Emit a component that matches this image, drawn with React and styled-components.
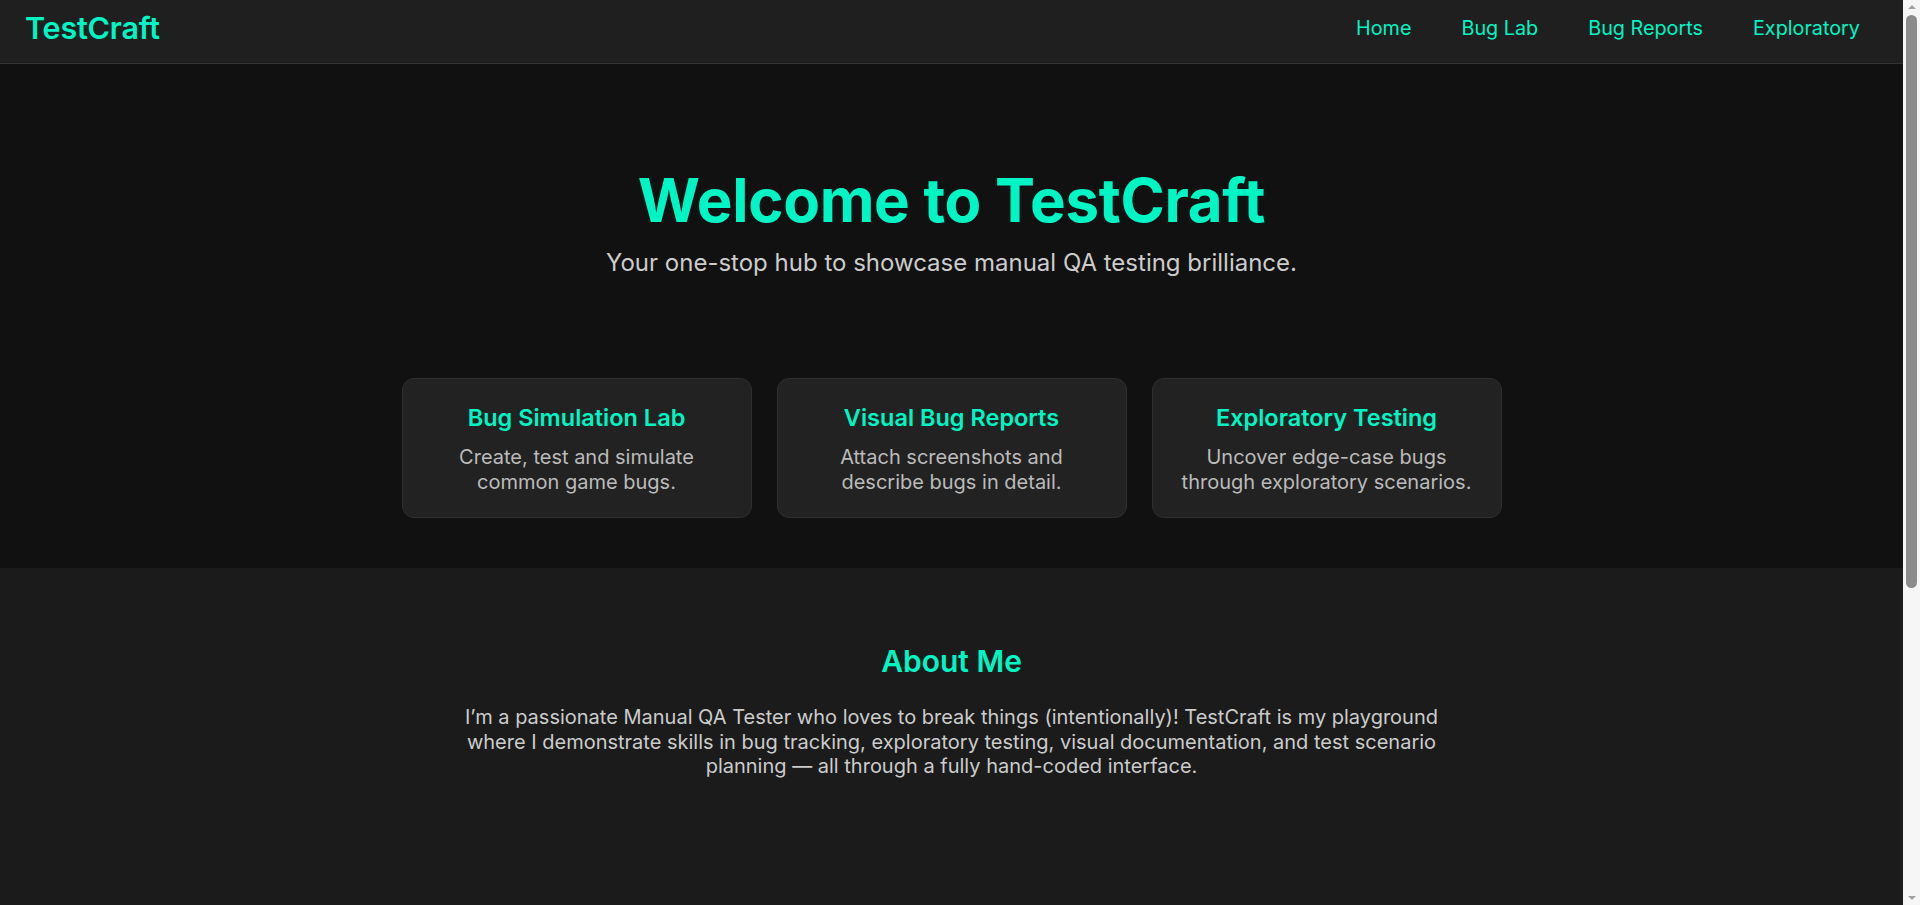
import styled, { createGlobalStyle } from 'styled-components';

const GlobalStyle = createGlobalStyle`
  html, body {
    margin: 0;
    padding: 0;
    background: #111111;
    font-family: 'Inter', 'Noto Sans', sans-serif;
    color: #cccccc;
  }
  body {
    padding-right: 17px;
  }
  * {
    box-sizing: border-box;
  }
`;

const accent = '#00f5c4';

const Header = styled.header`
  height: 64px;
  display: flex;
  align-items: center;
  justify-content: space-between;
  padding: 0 43px 7px 25px;
  background: #1f1f1f;
  border-bottom: 1px solid #333333;
`;

const Logo = styled.div`
  font-size: 30.5px;
  line-height: 36px;
  font-weight: 600;
  color: ${accent};
  letter-spacing: -0.2px;
`;

const Nav = styled.nav`
  display: flex;
  gap: 50px;
`;

const NavLink = styled.a`
  font-size: 19.8px;
  line-height: 24px;
  color: ${accent};
  text-decoration: none;
  cursor: pointer;
`;

const Hero = styled.section`
  display: flex;
  flex-direction: column;
  align-items: center;
  padding: 100px 20px 0;
  text-align: center;
`;

const Title = styled.h1`
  margin: 0;
  font-size: 60px;
  line-height: 72px;
  font-weight: 700;
  color: ${accent};
  letter-spacing: -0.3px;
`;

const Subtitle = styled.p`
  margin: 9px 0 0;
  font-size: 24px;
  line-height: 36px;
  color: #cccccc;
`;

const Features = styled.section`
  display: flex;
  justify-content: center;
  gap: 25px;
  padding: 97px 20px 50px;
`;

const Card = styled.div`
  width: 350px;
  height: 140px;
  padding: 24px 16px;
  background: #222222;
  border: 1px solid #2f2f2f;
  border-radius: 12px;
  text-align: center;
`;

const CardTitle = styled.h3`
  margin: 0 0 12px;
  font-size: 23.5px;
  line-height: 30px;
  font-weight: 600;
  color: ${accent};
`;

const CardText = styled.p`
  margin: 0;
  font-size: 20px;
  line-height: 25px;
  color: #bbbbbb;
`;

const About = styled.section`
  background: #1b1b1b;
  padding: 75px 20px 0;
  min-height: 807px;
  display: flex;
  flex-direction: column;
  align-items: center;
  text-align: center;
`;

const AboutTitle = styled.h2`
  margin: 0 0 26px;
  font-size: 30px;
  line-height: 36px;
  font-weight: 600;
  color: ${accent};
`;

const AboutText = styled.p`
  margin: 0;
  max-width: 1000px;
  font-size: 20px;
  line-height: 24.5px;
  color: #cccccc;
`;

// stand-in for the browser's classic scrollbar seen in the screenshot
const ScrollTrack = styled.div`
  position: fixed;
  top: 0;
  right: 0;
  width: 17px;
  height: 100vh;
  display: flex;
  flex-direction: column;
  align-items: center;
  padding: 0 3px;
  background: #f6f6f6;
`;

const Arrow = styled.div`
  flex: none;
  width: 0;
  height: 0;
  margin: 5px 0;
  border-left: 4px solid transparent;
  border-right: 4px solid transparent;
  ${(p) =>
    p.$down
      ? 'border-top: 4px solid #a3a3a3;'
      : 'border-bottom: 4px solid #a3a3a3;'}
`;

const Thumb = styled.div`
  flex: none;
  width: 11px;
  height: 573px;
  margin-top: 1px;
  border-radius: 6px;
  background: #8b8b8b;
`;

const Spacer = styled.div`
  flex: 1;
`;

const links = ['Home', 'Bug Lab', 'Bug Reports', 'Exploratory'];

const features = [
  {
    title: 'Bug Simulation Lab',
    lines: ['Create, test and simulate', 'common game bugs.'],
  },
  {
    title: 'Visual Bug Reports',
    lines: ['Attach screenshots and', 'describe bugs in detail.'],
  },
  {
    title: 'Exploratory Testing',
    lines: ['Uncover edge-case bugs', 'through exploratory scenarios.'],
  },
];

function App() {
  return (
    <>
      <GlobalStyle />
      <Header>
        <Logo>TestCraft</Logo>
        <Nav>
          {links.map((link) => (
            <NavLink key={link}>{link}</NavLink>
          ))}
        </Nav>
      </Header>
      <main>
        <Hero>
          <Title>Welcome to TestCraft</Title>
          <Subtitle>
            Your one-stop hub to showcase manual QA testing brilliance.
          </Subtitle>
        </Hero>
        <Features>
          {features.map((feature) => (
            <Card key={feature.title}>
              <CardTitle>{feature.title}</CardTitle>
              <CardText>
                {feature.lines[0]}
                <br />
                {feature.lines[1]}
              </CardText>
            </Card>
          ))}
        </Features>
        <About>
          <AboutTitle>About Me</AboutTitle>
          <AboutText>
            I’m a passionate Manual QA Tester who loves to break things
            (intentionally)! TestCraft is my playground where I demonstrate
            skills in bug tracking, exploratory testing, visual documentation,
            and test scenario planning — all through a fully hand-coded
            interface.
          </AboutText>
        </About>
      </main>
      <ScrollTrack>
        <Arrow />
        <Thumb />
        <Spacer />
        <Arrow $down />
      </ScrollTrack>
    </>
  );
}

export default App;
